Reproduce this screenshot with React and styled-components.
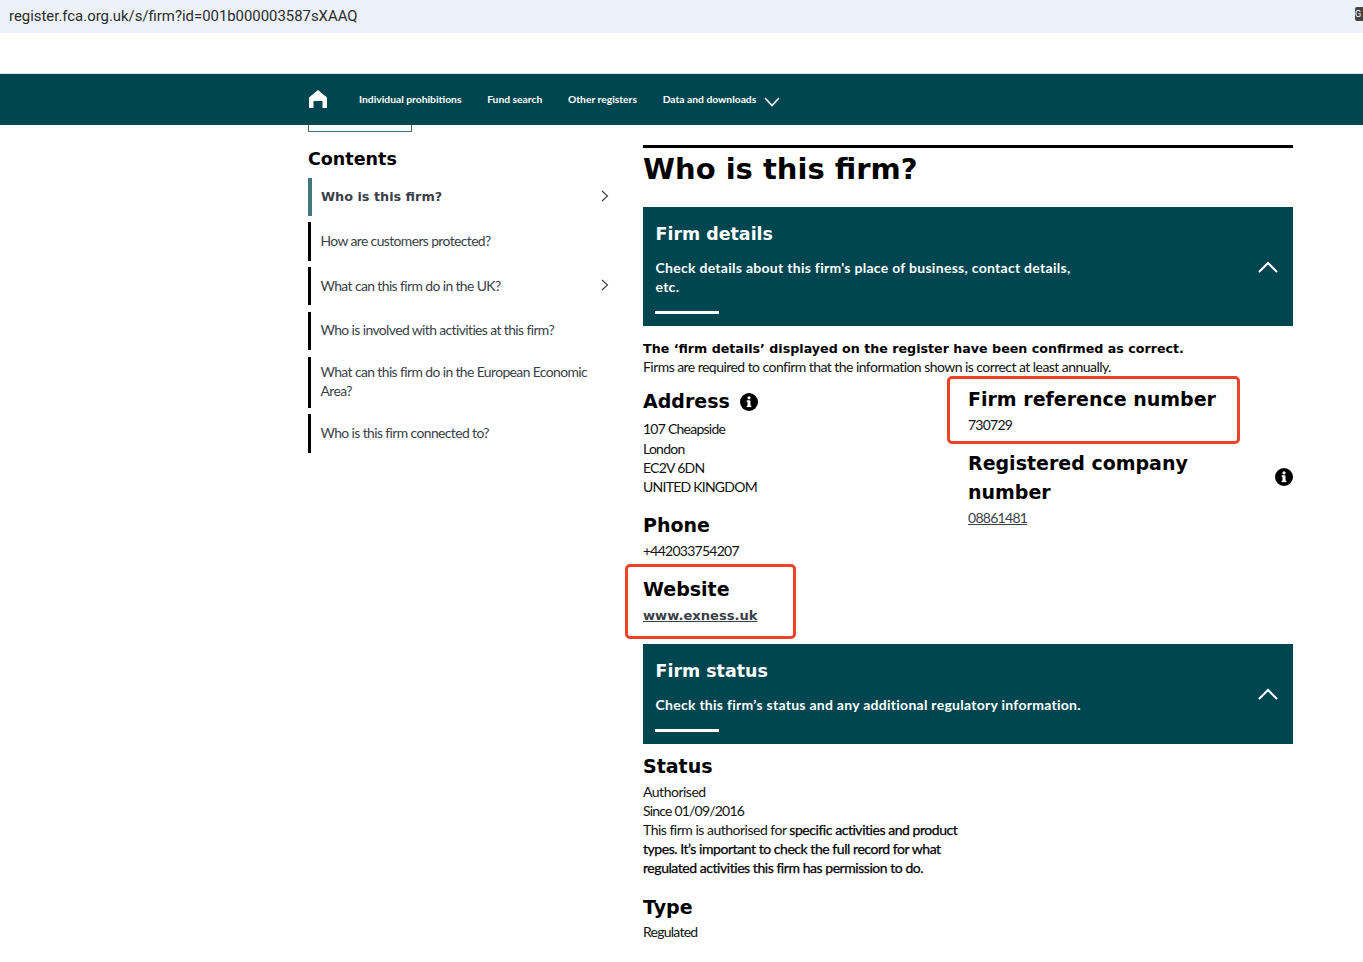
import React from "react";
import styled, { createGlobalStyle } from "styled-components";

const GlobalStyle = createGlobalStyle`
  html, body {
    margin: 0;
    padding: 0;
    background: #fff;
    font-family: "Lato", "Liberation Sans", sans-serif;
    color: #111;
  }
`;

const Page = styled.div`
  width: 1363px;
  height: 962px;
  overflow: hidden;
`;

const AddressBar = styled.div`
  height: 33px;
  background-color: #edf2fa;
  display: flex;
  align-items: center;
  justify-content: space-between;
  padding-left: 9px;
  font-family: "Roboto", sans-serif;
  font-size: 14.9px;
  color: #2b2b2b;
`;

const AddressText = styled.span`
  margin-top: -2px;
`;

const ExtensionIcon = styled.div`
  width: 8px;
  height: 14px;
  margin-top: -5px;
  background-color: #444;
  color: #fff;
  font-size: 9px;
  line-height: 14px;
  overflow: hidden;
  border-radius: 2px 0 0 2px;
`;

const TopGap = styled.div`
  height: 40px;
  border-bottom: 1px solid #dfe4e4;
`;

const NavBar = styled.nav`
  height: 51px;
  background-color: #004651;
  display: flex;
  align-items: center;
  padding-left: 309px;
  color: #fff;
  font-size: 10.3px;
  font-weight: 700;
`;

const HomeLink = styled.a`
  display: flex;
  width: 50px;
  margin-top: -1px;
`;

const NavLink = styled.a`
  margin-right: 25.7px;
  white-space: nowrap;
  margin-top: -1px;
`;

const NavChevron = styled.svg`
  margin: 5px 0 0 -18px;
`;

const Columns = styled.div`
  display: grid;
  grid-template-columns: 335px 650px;
  padding-left: 308px;
`;

const Sidebar = styled.aside`
  width: 305px;
`;

const ButtonStub = styled.div`
  width: 102px;
  height: 6px;
  border: 1px solid #3e6f76;
  border-top: 0;
`;

const ContentsTitle = styled.h2`
  margin: 16px 0 8px;
  font-family: "DejaVu Sans", sans-serif;
  font-size: 17.5px;
  line-height: 22px;
  font-weight: 700;
  color: #000;
`;

const ContentsList = styled.ul`
  list-style: none;
  margin: 0;
  padding: 0;
`;

const ContentsItem = styled.li`
  display: flex;
  align-items: center;
  justify-content: space-between;
  box-sizing: border-box;
  min-height: ${(p) => p.$height}px;
  margin-top: ${(p) => p.$top}px;
  padding: 0 4px ${(p) => p.$lift}px ${(p) => (p.$active ? 9 : 9.5)}px;
  border-left: ${(p) => (p.$active ? "4px solid #41777f" : "3px solid #000")};
  font-size: 13.9px;
  line-height: 19px;
  letter-spacing: -0.6px;
  color: #3a3f4a;
`;

const ActiveLabel = styled.span`
  font-family: "DejaVu Sans", sans-serif;
  font-weight: 700;
  font-size: 12.8px;
  letter-spacing: 0;
`;

const Main = styled.main`
  padding-top: 20px;
`;

const PageTitle = styled.h1`
  margin: 0 0 18px;
  padding-top: 2px;
  border-top: 3px solid #000;
  font-family: "DejaVu Sans", sans-serif;
  font-size: 29px;
  line-height: 39px;
  font-weight: 700;
  color: #000;
`;

const Banner = styled.section`
  position: relative;
  box-sizing: border-box;
  height: ${(p) => p.$height}px;
  padding: 16px 12.5px 0;
  background-color: #004651;
  color: #fff;
`;

const BannerTitle = styled.h2`
  margin: 0 0 12px;
  font-family: "DejaVu Sans", sans-serif;
  font-size: 17.45px;
  line-height: 23px;
  font-weight: 700;
`;

const BannerText = styled.p`
  width: ${(p) => p.$width}px;
  margin: 0;
  font-size: 14px;
  line-height: 19px;
  font-weight: 700;
  letter-spacing: ${(p) => p.$spacing}px;
`;

const BannerRule = styled.div`
  position: absolute;
  left: 12px;
  bottom: 12px;
  width: 64px;
  height: 3px;
  background-color: #fff;
`;

const BannerChevron = styled.svg`
  position: absolute;
  right: 15px;
  top: ${(p) => p.$top}px;
`;

const Notice = styled.div`
  margin: 14px 0 0;
  font-size: 14px;
  line-height: 19px;
  letter-spacing: -0.55px;
  color: #111;
`;

const NoticeStrong = styled.div`
  font-family: "DejaVu Sans", sans-serif;
  font-size: 12.66px;
  line-height: 17px;
  font-weight: 700;
  letter-spacing: 0;
  color: #000;
`;

const DetailsGrid = styled.div`
  display: grid;
  grid-template-columns: 325px 325px;
`;

const DetailColumn = styled.div`
  display: flex;
  flex-direction: column;
`;

const Block = styled.div`
  position: relative;
  margin-top: ${(p) => p.$top || 0}px;
`;

const Heading = styled.h3`
  display: flex;
  align-items: center;
  gap: 10px;
  margin: 0 0 ${(p) => p.$bottom ?? 1}px;
  font-family: "DejaVu Sans", sans-serif;
  font-size: 19px;
  line-height: 29px;
  font-weight: 700;
  color: #000;
`;

const BodyLine = styled.div`
  margin-bottom: ${(p) => p.$bottom || 0}px;
  font-size: 14px;
  line-height: 19px;
  letter-spacing: -0.75px;
  color: #111;
`;

const NumberLink = styled.a`
  display: block;
  font-size: 14px;
  line-height: 19px;
  letter-spacing: -0.72px;
  color: #3a3f4a;
  text-decoration: underline;
`;

const SiteLink = styled.a`
  display: block;
  font-family: "DejaVu Sans", sans-serif;
  font-size: 13.1px;
  line-height: 19px;
  font-weight: 700;
  color: #3a3f4a;
  text-decoration: underline;
`;

const RegisteredRow = styled.div`
  display: flex;
  align-items: center;
  justify-content: space-between;
`;

const RegisteredInfo = styled.svg`
  flex: none;
  margin-top: -3px;
`;

const Callout = styled.div`
  position: absolute;
  top: ${(p) => p.$top}px;
  left: ${(p) => p.$left}px;
  width: ${(p) => p.$width}px;
  height: ${(p) => p.$height}px;
  box-sizing: border-box;
  border: 3px solid #ee4127;
  border-radius: 5px;
  pointer-events: none;
`;

const StatusText = styled.div`
  width: 325px;
  font-size: 14px;
  line-height: 19px;
  letter-spacing: -0.5px;
  color: #111;
`;

const StatusDate = styled.div`
  letter-spacing: -0.8px;
`;

const Strong = styled.span`
  color: #000;
  letter-spacing: -0.45px;
  -webkit-text-stroke: 0.25px #000;
`;

const StrongBlock = styled.div`
  color: #000;
  letter-spacing: -0.45px;
  -webkit-text-stroke: 0.25px #000;
`;

const InfoIcon = ({ as: Comp = "svg", ...rest }) => (
  <Comp width="18" height="18" viewBox="0 0 18 18" {...rest}>
    <circle cx="9" cy="9" r="9" fill="#000" />
    <rect x="7.5" y="7.6" width="3" height="6.4" fill="#fff" />
    <rect x="6.6" y="7.4" width="3" height="1.4" fill="#fff" />
    <rect x="6.6" y="12.7" width="4.8" height="1.4" fill="#fff" />
    <circle cx="9" cy="4.8" r="1.6" fill="#fff" />
  </Comp>
);

const RightChevron = () => (
  <svg width="8" height="12" viewBox="0 0 8 12" fill="none">
    <path d="M1 1l5.5 5L1 11" stroke="#444" strokeWidth="1.2" />
  </svg>
);

const contents = [
  { label: "Who is this firm?", height: 38, top: 0, lift: 2, active: true, chevron: true },
  { label: "How are customers protected?", height: 39, top: 6, lift: 2 },
  { label: "What can this firm do in the UK?", height: 38, top: 6, lift: 2, chevron: true },
  { label: "Who is involved with activities at this firm?", height: 38, top: 7, lift: 4 },
  { label: "What can this firm do in the European Economic Area?", height: 51, top: 7, lift: 4 },
  { label: "Who is this firm connected to?", height: 39, top: 6, lift: 2 },
];

const navItems = ["Individual prohibitions", "Fund search", "Other registers", "Data and downloads"];

const App = () => (
  <Page>
    <GlobalStyle />
    <AddressBar>
      <AddressText>register.fca.org.uk/s/firm?id=001b000003587sXAAQ</AddressText>
      <ExtensionIcon>G</ExtensionIcon>
    </AddressBar>
    <TopGap />
    <NavBar>
      <HomeLink>
        <svg width="18" height="18" viewBox="0 0 18 18">
          <path d="M9 0l9 7.5V18h-4.5v-7h-9v7H0V7.5z" fill="#fff" />
        </svg>
      </HomeLink>
      {navItems.map((item) => (
        <NavLink key={item}>{item}</NavLink>
      ))}
      <NavChevron width="16" height="10" viewBox="0 0 16 10" fill="none">
        <path d="M1 1l7 7.5L15 1" stroke="#fff" strokeWidth="1.6" />
      </NavChevron>
    </NavBar>
    <Columns>
      <Sidebar>
        <ButtonStub />
        <ContentsTitle>Contents</ContentsTitle>
        <ContentsList>
          {contents.map((item) => (
            <ContentsItem
              key={item.label}
              $height={item.height}
              $top={item.top}
              $lift={item.lift}
              $active={item.active}
            >
              {item.active ? <ActiveLabel>{item.label}</ActiveLabel> : <span>{item.label}</span>}
              {item.chevron && <RightChevron />}
            </ContentsItem>
          ))}
        </ContentsList>
      </Sidebar>
      <Main>
        <PageTitle>Who is this firm?</PageTitle>
        <Banner $height={119}>
          <BannerTitle>Firm details</BannerTitle>
          <BannerText $width={430} $spacing={0.28}>
            Check details about this firm's place of business, contact details, etc.
          </BannerText>
          <BannerRule />
          <BannerChevron $top={54} width="20" height="12" viewBox="0 0 20 12" fill="none">
            <path d="M1 11l9-9 9 9" stroke="#fff" strokeWidth="2" />
          </BannerChevron>
        </Banner>
        <Notice>
          <NoticeStrong>The ‘firm details’ displayed on the register have been confirmed as correct.</NoticeStrong>
          Firms are required to confirm that the information shown is correct at least annually.
        </Notice>
        <DetailsGrid>
          <DetailColumn>
            <Block $top={11}>
              <Heading $bottom={3}>
                Address
                <InfoIcon />
              </Heading>
              <BodyLine $bottom={1}>107 Cheapside</BodyLine>
              <BodyLine>London</BodyLine>
              <BodyLine>EC2V 6DN</BodyLine>
              <BodyLine>UNITED KINGDOM</BodyLine>
            </Block>
            <Block $top={15}>
              <Heading>Phone</Heading>
              <BodyLine>+442033754207</BodyLine>
            </Block>
            <Block $top={15}>
              <Callout $top={-11} $left={-18} $width={171} $height={75} />
              <Heading $bottom={2}>Website</Heading>
              <SiteLink>www.exness.uk</SiteLink>
            </Block>
          </DetailColumn>
          <DetailColumn>
            <Block $top={9}>
              <Callout $top={-9} $left={-21} $width={293} $height={68} />
              <Heading>Firm reference number</Heading>
              <BodyLine>730729</BodyLine>
            </Block>
            <Block $top={15}>
              <RegisteredRow>
                <Heading $bottom={1}>
                  Registered company
                  <br />
                  number
                </Heading>
                <InfoIcon as={RegisteredInfo} />
              </RegisteredRow>
              <NumberLink>08861481</NumberLink>
            </Block>
          </DetailColumn>
        </DetailsGrid>
        <Block $top={19}>
          <Banner $height={100}>
            <BannerTitle>Firm status</BannerTitle>
            <BannerText $width={520} $spacing={0.27}>
              Check this firm’s status and any additional regulatory information.
            </BannerText>
            <BannerRule />
            <BannerChevron $top={44} width="20" height="12" viewBox="0 0 20 12" fill="none">
              <path d="M1 11l9-9 9 9" stroke="#fff" strokeWidth="2" />
            </BannerChevron>
          </Banner>
        </Block>
        <Block $top={8}>
          <Heading>Status</Heading>
          <StatusText>
            Authorised
            <StatusDate>Since 01/09/2016</StatusDate>
            This firm is authorised for <Strong>specific activities and product</Strong>
            <StrongBlock>
              types. It’s important to check the full record for what regulated activities this firm has permission to do.
            </StrongBlock>
          </StatusText>
        </Block>
        <Block $top={16}>
          <Heading $bottom={0}>Type</Heading>
          <BodyLine>Regulated</BodyLine>
        </Block>
      </Main>
    </Columns>
  </Page>
);

export default App;
